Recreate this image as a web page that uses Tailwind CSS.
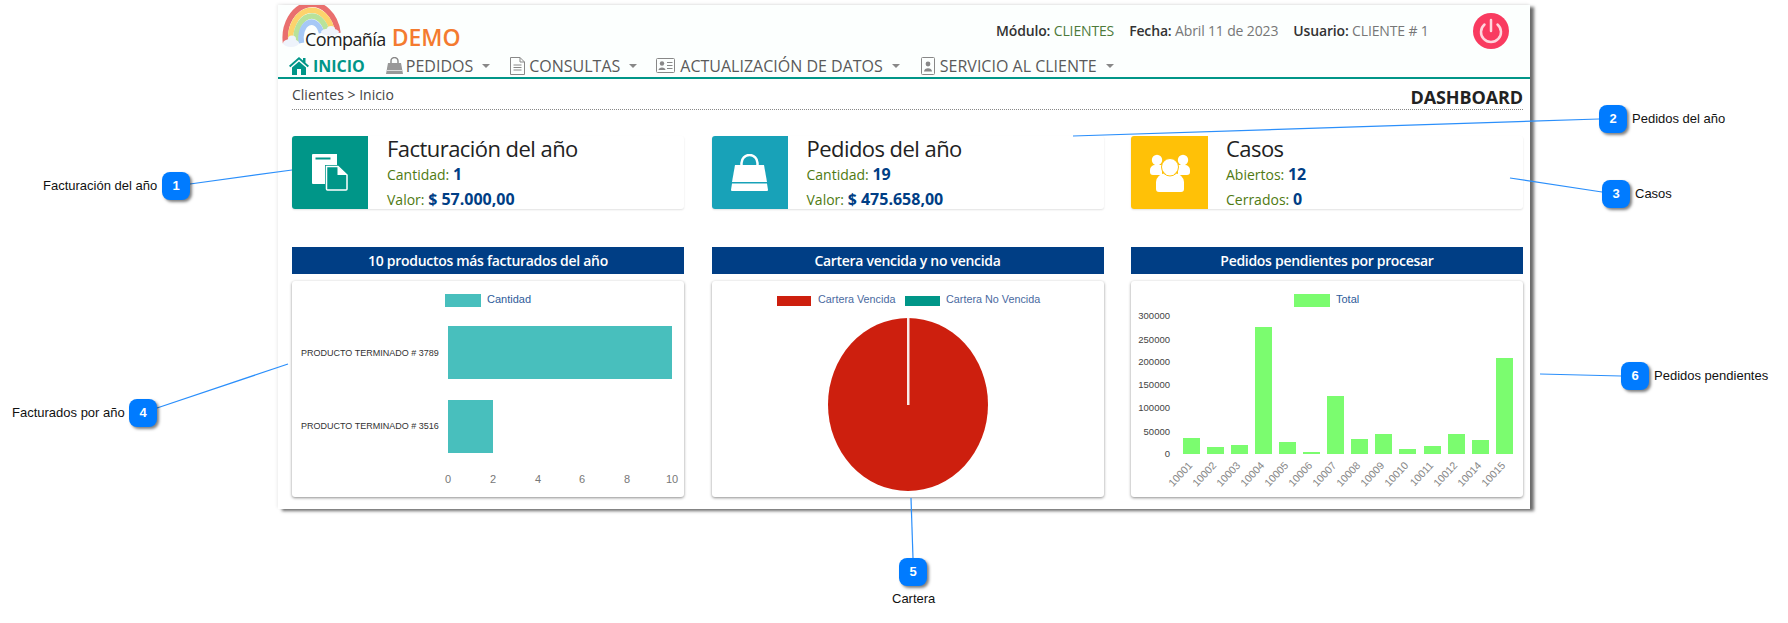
<!DOCTYPE html>
<html lang="es">
<head>
  <meta charset="UTF-8" />
  <title>Dashboard</title>
  <script src="https://cdn.jsdelivr.net/npm/@tailwindcss/browser@4"></script>
</head>
<body class="bg-white">
<div class="relative w-[1788px] h-[623px] overflow-hidden font-['Open_Sans',sans-serif]">

  <!-- Panel -->
  <div class="absolute left-[278px] top-[5px] w-[1252px] h-[504px] bg-white shadow-[4px_2px_3px_rgba(60,60,60,0.75),-1px_-1px_3px_rgba(0,0,0,0.08)]">

    <!-- Top bar -->
    <div class="relative h-[40px] bg-[#fcfffe]">
      <svg class="absolute left-[4px] top-0" width="62" height="44" viewBox="0 0 62 44">
        <g fill="none" stroke-width="5.5">
          <path d="M3.5 38 A26 33 0 0 1 56 28" stroke="#e96f6e" />
          <path d="M9 38 A20.5 27 0 0 1 50.5 28" stroke="#fdd36c" />
          <path d="M14.5 38 A15 21 0 0 1 45 28" stroke="#b8e29b" />
          <path d="M19.5 38 A10 15 0 0 1 39.5 28" stroke="#a6c8f6" />
        </g>
        <ellipse cx="9" cy="38" rx="8" ry="4" fill="#eef3fb" />
        <ellipse cx="10" cy="34" rx="4" ry="3.5" fill="#eef3fb" />
        <ellipse cx="48" cy="27" rx="9" ry="3.5" fill="#eef3fb" />
        <ellipse cx="49" cy="24" rx="4" ry="3" fill="#eef3fb" />
      </svg>
      <div class="absolute left-[27px] top-[20px] flex items-baseline gap-[6px] whitespace-nowrap">
        <span class="text-[18px] leading-[24px] tracking-[-0.6px] text-[#222]">Compañía</span>
        <span class="text-[23px] leading-[24px] font-semibold text-[#f47b30]">DEMO</span>
      </div>
      <div class="absolute left-[718px] top-[17px] flex gap-[15px] text-[14px] leading-[18px] tracking-[-0.15px] whitespace-nowrap">
        <span><b class="font-semibold text-[#333]">Módulo:</b> <span class="text-[#4d7a3a]">CLIENTES</span></span>
        <span><b class="font-semibold text-[#333]">Fecha:</b> <span class="text-[#777]">Abril 11 de 2023</span></span>
        <span><b class="font-semibold text-[#333]">Usuario:</b> <span class="text-[#777]">CLIENTE # 1</span></span>
      </div>
      <svg class="absolute left-[1195px] top-[8px]" width="36" height="36" viewBox="0 0 36 36">
        <circle cx="18" cy="18" r="18" fill="#f93b60" />
        <path d="M11.5 11.5 A10 10 0 1 0 24.5 11.5" fill="none" stroke="#ffd5dd" stroke-width="2.5" stroke-linecap="round" />
        <path d="M18 7 V18" stroke="#ffd5dd" stroke-width="2.5" stroke-linecap="round" />
      </svg>
    </div>

    <!-- Nav -->
    <nav class="h-[34px] bg-[#fcfffe] border-b-2 border-[#009688] pl-[11px] pt-[9px] flex items-center text-[16px] font-medium leading-[20px] text-[#5a5a5a] whitespace-nowrap">
      <svg class="mr-[4px]" width="20" height="18" viewBox="0 0 20 18" fill="#009688"><path d="M10 0 L0 8.8 L1.3 10.2 L10 2.6 L18.7 10.2 L20 8.8 L16.5 5.7 V1 H14 V3.5 Z M10 4.4 L3 10.5 V18 H8 V12 H12 V18 H17 V10.5 Z" /></svg>
      <span class="font-bold text-[#009688] mr-[21px]">INICIO</span>

      <svg class="mr-[3px]" width="17" height="17" viewBox="0 0 17 17"><path d="M5 6 V4 A3.5 3.5 0 0 1 12 4 V6" fill="none" stroke="#888" stroke-width="1.4" /><path d="M2 6 H15 L17 17 H0 Z" fill="#999" /><rect x="0" y="13" width="17" height="1" fill="#ddd" /></svg>
      <span>PEDIDOS</span>
      <span class="ml-[9px] mr-[20px] w-0 h-0 border-x-[4px] border-x-transparent border-t-[4px] border-t-[#888]"></span>

      <svg class="mr-[4px]" width="15" height="18" viewBox="0 0 15 18" fill="none" stroke="#888"><path d="M1 .5 H10 L14.5 5 V17.5 H.5 V.5 Z M10 .5 V5 H14.5" /><path d="M3.5 8 H11.5 M3.5 10.5 H11.5 M3.5 13 H11.5" /></svg>
      <span>CONSULTAS</span>
      <span class="ml-[9px] mr-[19px] w-0 h-0 border-x-[4px] border-x-transparent border-t-[4px] border-t-[#888]"></span>

      <svg class="mr-[5px]" width="19" height="15" viewBox="0 0 19 15"><rect x=".5" y=".5" width="18" height="14" rx="1" fill="none" stroke="#888" /><circle cx="6" cy="5.5" r="2.2" fill="#888" /><path d="M2.5 12 C2.5 8.5 9.5 8.5 9.5 12 Z" fill="#888" /><path d="M11 4.5 H16.5 M11 7.5 H16.5 M11 10.5 H16.5" stroke="#888" /></svg>
      <span>ACTUALIZACIÓN DE DATOS</span>
      <span class="ml-[9px] mr-[21px] w-0 h-0 border-x-[4px] border-x-transparent border-t-[4px] border-t-[#888]"></span>

      <svg class="mr-[5px]" width="14" height="18" viewBox="0 0 14 18"><rect x=".5" y=".5" width="13" height="17" rx="1" fill="none" stroke="#888" /><circle cx="7" cy="7" r="2.4" fill="#888" /><path d="M3 14.5 C3 10 11 10 11 14.5 Z" fill="#888" /></svg>
      <span>SERVICIO AL CLIENTE</span>
      <span class="ml-[9px] w-0 h-0 border-x-[4px] border-x-transparent border-t-[4px] border-t-[#888]"></span>
    </nav>

    <!-- Content -->
    <div class="px-[14px] pr-[7px]">
      <div class="h-[31px] border-b border-dotted border-[#888] flex justify-between items-center">
        <span class="text-[14px] text-[#444]">Clientes &gt; Inicio</span>
        <span class="text-[18px] font-bold text-[#222] relative top-[3px] tracking-[-0.1px]">DASHBOARD</span>
      </div>

      <!-- Summary cards -->
      <div class="grid grid-cols-3 gap-[27.5px] mt-[26px]">
        <div class="flex h-[73px] rounded-[3px] shadow-[0_1px_2px_rgba(0,0,0,0.12)]">
          <div class="w-[76px] bg-[#009688] rounded-l-[3px] flex items-center justify-center">
            <svg width="36" height="37" viewBox="0 0 36 37" fill="#fff"><path d="M1 0 H25 V11 H13 V30 H1 A1 1 0 0 1 0 29 V1 A1 1 0 0 1 1 0 Z" /><rect x="3.5" y="3.5" width="15" height="2" fill="#009688" /><path d="M14.5 12.5 H26 L35 21 V35 A1 1 0 0 1 34 36 H15.5 A1 1 0 0 1 14.5 35 Z" fill="#009688" stroke="#fff" stroke-width="1.5" /><path d="M25.5 12.5 L35 21 H25.5 Z" /></svg>
          </div>
          <div class="pl-[19px]">
            <div class="text-[22px] leading-[28px] tracking-[-0.55px] text-[#222] mt-[-2px]">Facturación del año</div>
            <div class="text-[14px] leading-[24px] text-[#4f7a12] font-medium">Cantidad: <span class="text-[16px] font-bold text-[#003e85]">1</span></div>
            <div class="text-[14px] leading-[24px] text-[#4f7a12] font-medium">Valor: <span class="text-[16px] font-bold text-[#003e85]">$ 57.000,00</span></div>
          </div>
        </div>

        <div class="flex h-[73px] rounded-[3px] shadow-[0_1px_2px_rgba(0,0,0,0.12)]">
          <div class="w-[76px] bg-[#18a2b8] rounded-l-[3px] flex items-center justify-center">
            <svg width="37" height="38" viewBox="0 0 37 38" fill="#fff"><path d="M10.5 13 V9 A8 8 0 0 1 26.5 9 V13" fill="none" stroke="#fff" stroke-width="2.5" /><path d="M4 11 H33 L36 28 H1 Z" /><path d="M1 29.5 H36 L37 36 A1 1 0 0 1 36 37 H1 A1 1 0 0 1 0 36 Z" /></svg>
          </div>
          <div class="pl-[19px]">
            <div class="text-[22px] leading-[28px] tracking-[-0.55px] text-[#222] mt-[-2px]">Pedidos del año</div>
            <div class="text-[14px] leading-[24px] text-[#4f7a12] font-medium">Cantidad: <span class="text-[16px] font-bold text-[#003e85]">19</span></div>
            <div class="text-[14px] leading-[24px] text-[#4f7a12] font-medium">Valor: <span class="text-[16px] font-bold text-[#003e85]">$ 475.658,00</span></div>
          </div>
        </div>

        <div class="flex h-[73px] rounded-[3px] shadow-[0_1px_2px_rgba(0,0,0,0.12)]">
          <div class="w-[77px] bg-[#ffc107] rounded-l-[3px] flex items-center justify-center">
            <svg width="40" height="38" viewBox="0 0 40 38" fill="#fff"><circle cx="7" cy="6" r="5.2" /><circle cx="33" cy="6" r="5.2" /><path d="M0 16 A5 5 0 0 1 5 11 H12 V21 H3 A3 3 0 0 1 0 18 Z M40 16 A5 5 0 0 0 35 11 H28 V21 H37 A3 3 0 0 0 40 18 Z" /><circle cx="20" cy="13" r="8.5" stroke="#ffc107" stroke-width="1" /><path d="M6 28 A9 9 0 0 1 15 19.5 H25 A9 9 0 0 1 34 28 V35 A3 3 0 0 1 31 38 H9 A3 3 0 0 1 6 35 Z" /><path d="M14 19.5 A8.5 8.5 0 0 0 26 19.5" fill="none" stroke="#ffc107" stroke-width="1" /></svg>
          </div>
          <div class="pl-[18px]">
            <div class="text-[22px] leading-[28px] tracking-[-0.55px] text-[#222] mt-[-2px]">Casos</div>
            <div class="text-[14px] leading-[24px] text-[#4f7a12] font-medium">Abiertos: <span class="text-[16px] font-bold text-[#003e85]">12</span></div>
            <div class="text-[14px] leading-[24px] text-[#4f7a12] font-medium">Cerrados: <span class="text-[16px] font-bold text-[#003e85]">0</span></div>
          </div>
        </div>
      </div>

      <!-- Charts -->
      <div class="grid grid-cols-3 gap-[27.5px] mt-[38px] font-['Liberation_Sans',sans-serif]">
        <div>
          <div class="h-[27px] bg-[#003e85] text-white text-[14px] tracking-[-0.3px] font-semibold font-['Open_Sans',sans-serif] flex items-center justify-center">10 productos más facturados del año</div>
          <div class="mt-[7px] h-[216px] rounded-[3px] shadow-[0_1px_3px_rgba(0,0,0,0.45)]">
            <svg width="393" height="216" viewBox="0 0 393 216" font-family="Liberation Sans, sans-serif">
              <rect x="153" y="13" width="36" height="13" fill="#48bfbd" />
              <text x="195" y="22" font-size="11" fill="#2e5c9a">Cantidad</text>
              <rect x="156" y="45" width="224" height="53" fill="#48bfbd" />
              <rect x="156" y="119" width="45" height="53" fill="#48bfbd" />
              <text x="9" y="75" font-size="9" fill="#333">PRODUCTO TERMINADO # 3789</text>
              <text x="9" y="148" font-size="9" fill="#333">PRODUCTO TERMINADO # 3516</text>
              <g font-size="11" fill="#777" text-anchor="middle">
                <text x="156" y="202">0</text><text x="201" y="202">2</text><text x="246" y="202">4</text><text x="290" y="202">6</text><text x="335" y="202">8</text><text x="380" y="202">10</text>
              </g>
            </svg>
          </div>
        </div>

        <div>
          <div class="h-[27px] bg-[#003e85] text-white text-[14px] tracking-[-0.3px] font-semibold font-['Open_Sans',sans-serif] flex items-center justify-center">Cartera vencida y no vencida</div>
          <div class="mt-[7px] h-[216px] rounded-[3px] shadow-[0_1px_3px_rgba(0,0,0,0.45)]">
            <svg width="392" height="216" viewBox="0 0 392 216" font-family="Liberation Sans, sans-serif">
              <rect x="65" y="15" width="34" height="10" fill="#cd1f0e" />
              <text x="106" y="22" font-size="10.8" fill="#4a6a9f">Cartera Vencida</text>
              <rect x="193" y="15" width="35" height="10" fill="#009688" />
              <text x="234" y="22" font-size="10.8" fill="#4a6a9f">Cartera No Vencida</text>
              <ellipse cx="196" cy="123.5" rx="80" ry="86.5" fill="#cd1f0e" />
              <rect x="195" y="37" width="2.5" height="87" fill="#f8ece9" />
            </svg>
          </div>
        </div>

        <div>
          <div class="h-[27px] bg-[#003e85] text-white text-[14px] tracking-[-0.3px] font-semibold font-['Open_Sans',sans-serif] flex items-center justify-center">Pedidos pendientes por procesar</div>
          <div class="mt-[7px] h-[216px] rounded-[3px] shadow-[0_1px_3px_rgba(0,0,0,0.45)]">
            <svg width="393" height="216" viewBox="0 0 393 216" font-family="Liberation Sans, sans-serif">
              <rect x="163" y="13" width="36" height="13" fill="#7bfc6f" />
              <text x="205" y="22" font-size="11" fill="#2e5c9a">Total</text>
              <g font-size="9.5" fill="#444" text-anchor="end">
                <text x="39" y="37.5">300000</text><text x="39" y="61.5">250000</text><text x="39" y="84">200000</text><text x="39" y="106.5">150000</text><text x="39" y="129.5">100000</text><text x="39" y="153.5">50000</text><text x="39" y="175.5">0</text>
              </g>
              <g fill="#7bfc6f">
                <rect x="52" y="157" width="17" height="16" />
                <rect x="76" y="166" width="17" height="7" />
                <rect x="100" y="164" width="17" height="9" />
                <rect x="124" y="46" width="17" height="127" />
                <rect x="148" y="161" width="17" height="12" />
                <rect x="172" y="171" width="17" height="2" />
                <rect x="196" y="115" width="17" height="58" />
                <rect x="220" y="158" width="17" height="15" />
                <rect x="244" y="153" width="17" height="20" />
                <rect x="268" y="168" width="17" height="5" />
                <rect x="293" y="165" width="17" height="8" />
                <rect x="317" y="153" width="17" height="20" />
                <rect x="341" y="159" width="17" height="14" />
                <rect x="365" y="77" width="17" height="96" />
              </g>
              <g font-size="10.5" fill="#888" text-anchor="end">
                <text transform="translate(62 185) rotate(-47)">10001</text>
                <text transform="translate(86 185) rotate(-47)">10002</text>
                <text transform="translate(110 185) rotate(-47)">10003</text>
                <text transform="translate(134 185) rotate(-47)">10004</text>
                <text transform="translate(158 185) rotate(-47)">10005</text>
                <text transform="translate(182 185) rotate(-47)">10006</text>
                <text transform="translate(206 185) rotate(-47)">10007</text>
                <text transform="translate(230 185) rotate(-47)">10008</text>
                <text transform="translate(254 185) rotate(-47)">10009</text>
                <text transform="translate(278 185) rotate(-47)">10010</text>
                <text transform="translate(303 185) rotate(-47)">10011</text>
                <text transform="translate(327 185) rotate(-47)">10012</text>
                <text transform="translate(351 185) rotate(-47)">10014</text>
                <text transform="translate(375 185) rotate(-47)">10015</text>
              </g>
            </svg>
          </div>
        </div>
      </div>
    </div>
  </div>

  <!-- Callout lines -->
  <svg class="absolute inset-0" width="1788" height="623" fill="none" stroke="#2b8ffb" stroke-width="1.2">
    <path d="M190 184 L292 170" />
    <path d="M1073 136 L1599 119" />
    <path d="M1510 178 L1602 192" />
    <path d="M157 408 L288 364" />
    <path d="M911 498 L913 558" />
    <path d="M1540 374 L1621 376" />
  </svg>

  <!-- Callout badges -->
  <div class="absolute left-[162px] top-[172px] size-[28px] rounded-[8px] bg-[#007bff] shadow-[2px_2px_3px_rgba(0,0,0,0.5)] text-white text-[13px] font-bold font-['Liberation_Sans',sans-serif] flex items-center justify-center">1</div>
  <div class="absolute left-[1599px] top-[105px] size-[28px] rounded-[8px] bg-[#007bff] shadow-[2px_2px_3px_rgba(0,0,0,0.5)] text-white text-[13px] font-bold font-['Liberation_Sans',sans-serif] flex items-center justify-center">2</div>
  <div class="absolute left-[1602px] top-[180px] size-[28px] rounded-[8px] bg-[#007bff] shadow-[2px_2px_3px_rgba(0,0,0,0.5)] text-white text-[13px] font-bold font-['Liberation_Sans',sans-serif] flex items-center justify-center">3</div>
  <div class="absolute left-[129px] top-[399px] size-[28px] rounded-[8px] bg-[#007bff] shadow-[2px_2px_3px_rgba(0,0,0,0.5)] text-white text-[13px] font-bold font-['Liberation_Sans',sans-serif] flex items-center justify-center">4</div>
  <div class="absolute left-[899px] top-[558px] size-[28px] rounded-[8px] bg-[#007bff] shadow-[2px_2px_3px_rgba(0,0,0,0.5)] text-white text-[13px] font-bold font-['Liberation_Sans',sans-serif] flex items-center justify-center">5</div>
  <div class="absolute left-[1621px] top-[362px] size-[28px] rounded-[8px] bg-[#007bff] shadow-[2px_2px_3px_rgba(0,0,0,0.5)] text-white text-[13px] font-bold font-['Liberation_Sans',sans-serif] flex items-center justify-center">6</div>

  <!-- Callout labels -->
  <span class="absolute left-[43px] top-[178px] text-[13px] leading-[16px] text-[#111] whitespace-nowrap font-['Liberation_Sans',sans-serif]">Facturación del año</span>
  <span class="absolute left-[1632px] top-[111px] text-[13px] leading-[16px] text-[#111] whitespace-nowrap font-['Liberation_Sans',sans-serif]">Pedidos del año</span>
  <span class="absolute left-[1635px] top-[186px] text-[13px] leading-[16px] text-[#111] whitespace-nowrap font-['Liberation_Sans',sans-serif]">Casos</span>
  <span class="absolute left-[12px] top-[405px] text-[13px] leading-[16px] text-[#111] whitespace-nowrap font-['Liberation_Sans',sans-serif]">Facturados por año</span>
  <span class="absolute left-[892px] top-[591px] text-[13px] leading-[16px] text-[#111] whitespace-nowrap font-['Liberation_Sans',sans-serif]">Cartera</span>
  <span class="absolute left-[1654px] top-[368px] text-[13px] leading-[16px] text-[#111] whitespace-nowrap font-['Liberation_Sans',sans-serif]">Pedidos pendientes</span>
</div>
</body>
</html>
